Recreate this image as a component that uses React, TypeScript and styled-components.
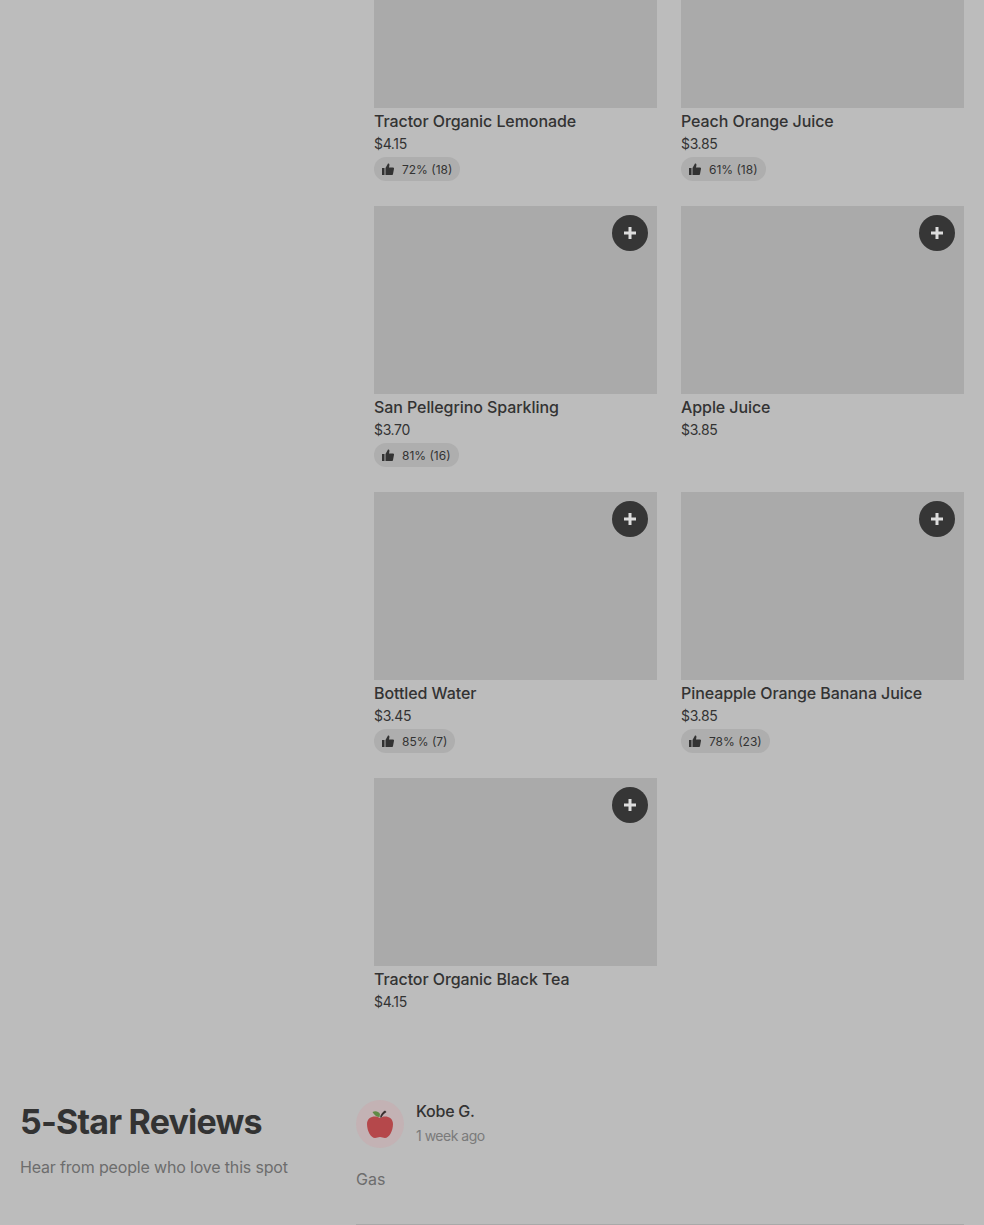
import React from "react";
import styled, { createGlobalStyle } from "styled-components";

const Global = createGlobalStyle`
  html, body { margin: 0; padding: 0; background: #bcbcbc; overflow: hidden; }
  body { font-family: Inter, "Liberation Sans", sans-serif; color: #333; }
`;

const Page = styled.div`
  width: 984px;
  height: 1225px;
  overflow: hidden;
  background: #bcbcbc;
`;

const MenuSection = styled.section`
  display: grid;
  grid-template-columns: repeat(2, 283px);
  column-gap: 24px;
  row-gap: 0;
  padding-left: 374px;
  height: 1098px;
  align-content: start;
`;

const Card = styled.article`
  height: 286px;
  &:first-child, &:nth-child(2) { height: 206px; }
`;

const Thumb = styled.div<{ $cropped?: boolean }>`
  position: relative;
  height: ${(p) => (p.$cropped ? 108 : 188)}px;
  background: #aaaaaa;
`;

const AddButton = styled.div`
  position: absolute;
  top: 9px;
  right: 9px;
  width: 36px;
  height: 36px;
  border-radius: 50%;
  background: #363636;
  display: flex;
  align-items: center;
  justify-content: center;
`;

const ItemName = styled.div`
  margin-top: 3px;
  font-size: 16px;
  line-height: 20px;
  font-weight: 500;
  letter-spacing: -0.08px;
  color: #333;
  white-space: nowrap;
`;

const Price = styled.div`
  margin-top: 3px;
  font-size: 14px;
  line-height: 20px;
  letter-spacing: -0.35px;
  color: #333;
`;

const Rating = styled.div`
  display: inline-flex;
  align-items: center;
  gap: 8px;
  height: 24px;
  margin-top: 3px;
  padding: 0 8px;
  border-radius: 12px;
  background: #aeaeae;
  font-size: 12px;
  color: #333;
  white-space: nowrap;
`;

const ReviewSection = styled.section`
  display: grid;
  grid-template-columns: 336px 1fr;
  padding: 0 20px;
`;

const Heading = styled.h2`
  margin: 0;
  font-size: 34px;
  line-height: 44px;
  font-weight: 700;
  letter-spacing: -0.8px;
  color: #333;
  padding-top: 2px;
`;

const Sub = styled.div`
  margin-top: 11px;
  font-size: 16px;
  line-height: 24px;
  letter-spacing: -0.17px;
  color: #6d6d6d;
`;

const Review = styled.div`
  padding-top: 2px;
  border-bottom: 1px solid #a9a9a9;
  height: 127px;
  box-sizing: border-box;
`;

const Reviewer = styled.div`
  display: flex;
  gap: 12px;
`;

const Avatar = styled.div`
  width: 48px;
  height: 48px;
  border-radius: 50%;
  background: #c3b2b4;
  display: flex;
  align-items: center;
  justify-content: center;
`;

const ReviewerName = styled.div`
  margin-top: 1px;
  font-size: 16px;
  line-height: 20px;
  font-weight: 500;
  letter-spacing: -0.25px;
  color: #333;
`;

const ReviewDate = styled.div`
  margin-top: 5px;
  font-size: 14px;
  line-height: 20px;
  letter-spacing: -0.5px;
  color: #7a7a7a;
`;

const ReviewText = styled.div`
  margin-top: 19px;
  font-size: 16px;
  line-height: 24px;
  color: #6d6d6d;
`;

const Thumbs = () => (
  <svg width="12" height="12" viewBox="0 0 12 12" fill="#333">
    <rect x="0" y="5" width="2.5" height="7" />
    <path d="M3.5 5 6 0.5c1 0 1.6.7 1.4 1.7L7 4.5h4c.7 0 1.1.6 1 1.2l-1 5.2c-.1.6-.5 1.1-1.2 1.1H3.500z" />
  </svg>
);

const Plus = () => (
  <svg width="14" height="14" viewBox="0 0 14 14" fill="#dddddd">
    <rect x="5.500" y="1" width="3" height="12" />
    <rect x="1" y="5.500" width="12" height="3" />
  </svg>
);

const Apple = () => (
  <svg width="28" height="30" viewBox="0 0 28 30">
    <path d="M14 9C10 6 1 7 1 15c0 7 4 14 8 14 2 0 3-1 5-1s3 1 5 1c4 0 8-7 8-14 0-8-9-9-13-6z" fill="#b5484b" />
    <path d="M13.500 8C11 8 8 6 6.500 3c3-1.500 6-.5 7.500 2z" fill="#5f8a45" />
    <path d="M14 8.500c.5-3 2.500-5.500 5-7l1.500 1.500C18 4.500 16.500 6.500 15.500 8.500z" fill="#3a3030" />
  </svg>
);

const items = [
  { name: "Tractor Organic Lemonade", price: "$4.15", rating: "72% (18)", cropped: true },
  { name: "Peach Orange Juice", price: "$3.85", rating: "61% (18)", cropped: true },
  { name: "San Pellegrino Sparkling", price: "$3.70", rating: "81% (16)" },
  { name: "Apple Juice", price: "$3.85" },
  { name: "Bottled Water", price: "$3.45", rating: "85% (7)" },
  { name: "Pineapple Orange Banana Juice", price: "$3.85", rating: "78% (23)" },
  { name: "Tractor Organic Black Tea", price: "$4.15" },
];

export default function App() {
  return (
    <Page>
      <Global />
      <MenuSection>
        {items.map((item) => (
          <Card key={item.name}>
            <Thumb $cropped={item.cropped}>
              {!item.cropped && (
                <AddButton>
                  <Plus />
                </AddButton>
              )}
            </Thumb>
            <ItemName>{item.name}</ItemName>
            <Price>{item.price}</Price>
            {item.rating && (
              <Rating>
                <Thumbs />
                {item.rating}
              </Rating>
            )}
          </Card>
        ))}
      </MenuSection>
      <ReviewSection>
        <div>
          <Heading>5-Star Reviews</Heading>
          <Sub>Hear from people who love this spot</Sub>
        </div>
        <Review>
          <Reviewer>
            <Avatar>
              <Apple />
            </Avatar>
            <div>
              <ReviewerName>Kobe G.</ReviewerName>
              <ReviewDate>1 week ago</ReviewDate>
            </div>
          </Reviewer>
          <ReviewText>Gas</ReviewText>
        </Review>
      </ReviewSection>
    </Page>
  );
}
